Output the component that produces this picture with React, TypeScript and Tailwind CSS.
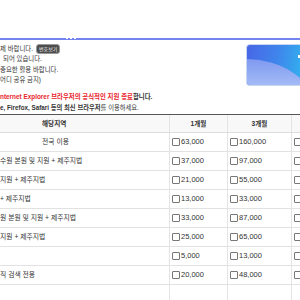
const rows: { label: string; indent: number; m1: string; m3: string }[] = [
	{ label: "전국 이용", indent: 42, m1: "63,000", m3: "160,000" },
	{ label: "수원 본원 및 지원 + 제주지법", indent: 0, m1: "37,000", m3: "97,000" },
	{ label: "지원 + 제주지법", indent: 0, m1: "21,000", m3: "55,000" },
	{ label: "+ 제주지법", indent: 0, m1: "13,000", m3: "33,000" },
	{ label: "원 본원 및 지원 + 제주지법", indent: 0, m1: "33,000", m3: "87,000" },
	{ label: "지원 + 제주지법", indent: 0, m1: "25,000", m3: "65,000" },
	{ label: "", indent: 0, m1: "5,000", m3: "13,000" },
	{ label: "직 검색 전용", indent: 0, m1: "20,000", m3: "48,000" },
];

const font = { fontFamily: '"Liberation Sans", "Noto Sans CJK KR", sans-serif' };

const Check = () => (
	<span className="mr-[1px] inline-block h-[8px] w-[8px] shrink-0 rounded-[1px] border border-[#777] bg-white" />
);

const Price = ({ value }: { value: string }) => (
	<div className="flex items-center border-r border-[#e4e4e4] pl-[2px]">
		<Check />
		<span className="text-[7.5px] text-[#333]">{value}</span>
	</div>
);

export default function App() {
	return (
		<div className="h-[300px] w-[300px] overflow-hidden bg-white text-[#333]" style={font}>
			<div className="h-[38px]" />
			<div className="relative h-[2px] bg-[#7383f0]">
				<span className="absolute left-[66px] top-0 h-[1px] w-[2px] bg-white" />
				<span className="absolute left-[70px] top-0 h-[1px] w-[2px] bg-white" />
				<span className="absolute left-[74px] top-0 h-[1px] w-[2px] bg-white" />
			</div>

			<div className="flex h-[48px] pt-[4px]">
				<div className="flex-1 text-[6.4px] leading-[10.4px] text-[#333]">
					<div className="flex items-center">
						<span>제 바랍니다.</span>
						<span className="ml-[3px] rounded-[3px] border border-[#999] bg-[#4d4d4d] px-[2px] text-[5px] leading-[8px] text-white">
							번호보기
						</span>
					</div>
					<div className="ml-[3px]">되어 있습니다.</div>
					<div>중요한 활용 바랍니다.</div>
					<div>어디 공유 금지)</div>
				</div>
				<div className="relative h-[42px] w-[54px] overflow-hidden rounded-l-[4px] border border-r-0 border-[#c9d6f2] bg-[linear-gradient(100deg,#4866e6_0%,#3f86ec_55%,#32b0ee_100%)]">
					<div className="absolute left-[-72px] top-[14px] h-[100px] w-[140px] rounded-[50%] bg-[linear-gradient(180deg,#7f99f0_0%,#a9c0f6_30%,#dce8fc_60%)]" />
					<span className="absolute right-0 top-[10px] h-[3px] w-[2px] bg-white" />
				</div>
			</div>

			<div className="mt-[3px] whitespace-nowrap text-[6.4px] font-bold leading-[11px]">
				<span className="text-[#e8242b]">nternet Explorer 브라우저의 공식적인 지원 종료</span>
				<span className="text-[#333]">합니다.</span>
			</div>
			<div className="whitespace-nowrap text-[6.3px] leading-[11px]">
				<span className="font-bold">e, Firefox, Safari 등의 최신 브라우저</span>
				<span>를 이용하세요.</span>
			</div>

			<div className="mt-[1px] border-t border-[#555]">
				<div className="grid h-[18px] grid-cols-[170px_58px_64px_1fr] border-b border-[#dcdcdc] bg-[#f8f8f8] text-[6.6px] font-bold">
					<div className="flex items-center border-r border-[#e4e4e4] pl-[42px]">해당지역</div>
					<div className="flex items-center justify-center border-r border-[#e4e4e4]">1개월</div>
					<div className="flex items-center justify-center border-r border-[#e4e4e4]">3개월</div>
					<div />
				</div>
				{rows.map((r, i) => (
					<div
						key={`row_${i}`}
						className="grid h-[19px] grid-cols-[170px_58px_64px_1fr] border-b border-[#e2e2e2]"
					>
						<div className="flex items-center overflow-hidden whitespace-nowrap border-r border-[#e4e4e4] text-[6.8px]">
							<span style={{ marginLeft: r.indent }}>{r.label}</span>
						</div>
						<Price value={r.m1} />
						<Price value={r.m3} />
						<div className="flex items-center pl-[2px]">
							<Check />
						</div>
					</div>
				))}
				<div className="grid h-[19px] grid-cols-[170px_58px_64px_1fr]">
					<div className="border-r border-[#e4e4e4]" />
					<div className="border-r border-[#e4e4e4]" />
					<div className="border-r border-[#e4e4e4]" />
					<div />
				</div>
			</div>
		</div>
	);
}
